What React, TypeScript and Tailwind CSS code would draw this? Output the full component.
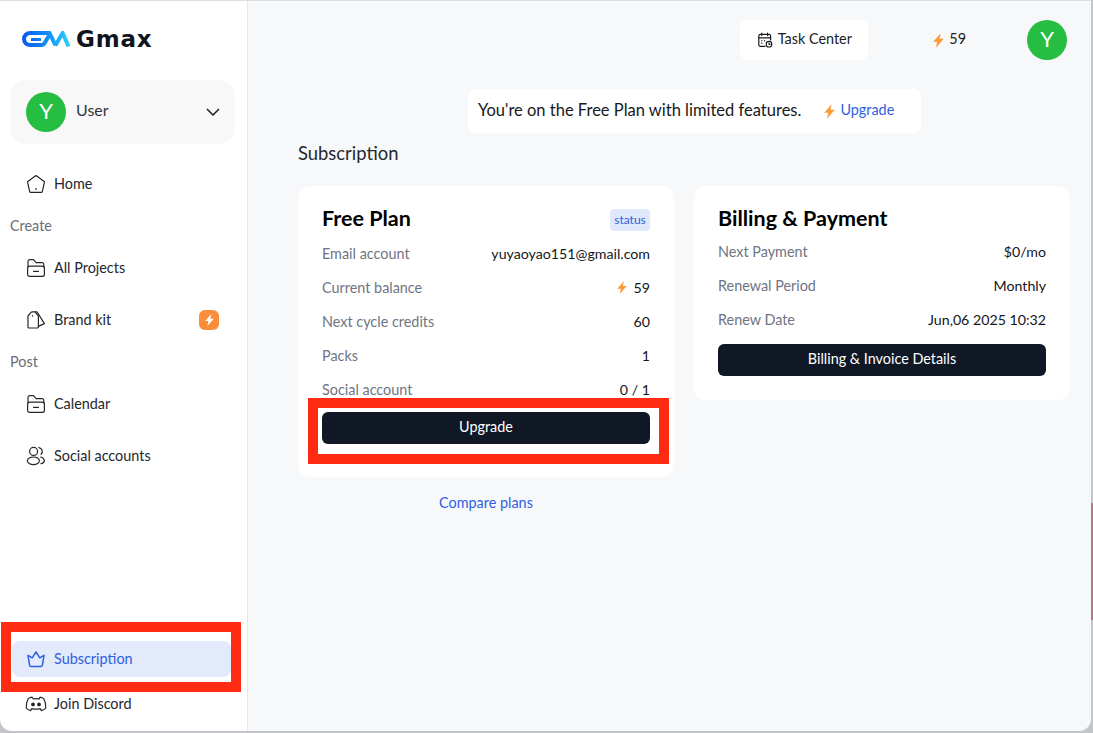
const font = { fontFamily: "Lato, 'Open Sans', sans-serif" };

type IconProps = { className?: string };

function Bolt({ className }: IconProps) {
  return (
    <svg viewBox="0 0 12 16" className={className} fill="#fb9a35">
      <path d="M8.4 0 0.2 9.4H4.6L3.2 16 11.8 6.2H7L8.4 0Z" />
    </svg>
  );
}

function Logo() {
  return (
    <svg viewBox="0 0 48 16" className="h-4 w-12" fill="none">
      <defs>
        <linearGradient id="gm" x1="0" x2="48" y1="0" y2="0" gradientUnits="userSpaceOnUse">
          <stop offset="0" stopColor="#0a58f0" />
          <stop offset="0.55" stopColor="#1391f4" />
          <stop offset="1" stopColor="#2ad4f5" />
        </linearGradient>
      </defs>
      <path
        d="M27 2H8.5C4.4 2 2 4.6 2 8S4.4 14 8.5 14H19.5C21.2 14 22 13.2 22.8 11.8L28 3L33.6 14.4"
        stroke="url(#gm)"
        strokeWidth="4"
      />
      <path d="M9 8.6H19" stroke="url(#gm)" strokeWidth="3" />
      <path d="M33.4 14.4L40.6 2L46.6 15.5" stroke="url(#gm)" strokeWidth="4" />
    </svg>
  );
}

const stroke = {
  fill: "none",
  stroke: "currentColor",
  strokeWidth: 1.2,
  strokeLinecap: "round" as const,
  strokeLinejoin: "round" as const,
};

function HomeIcon() {
  return (
    <svg viewBox="0 0 20 20" className="h-5 w-5" {...stroke}>
      <path d="M10 1.5 18.5 7.8 16.3 17.6a1 1 0 0 1-1 .8H4.7a1 1 0 0 1-1-.8L1.5 7.8 10 1.5Z" />
      <path d="M10 14.5v1" />
    </svg>
  );
}

function FolderIcon() {
  return (
    <svg viewBox="0 0 20 20" className="h-5 w-5" {...stroke}>
      <path d="M2 9V3.5A1.8 1.8 0 0 1 3.8 1.7H7.5L10 4.6H16A1.8 1.8 0 0 1 17.8 6.4V9" />
      <rect x="1.6" y="8.2" width="16.8" height="10.2" rx="2.2" />
      <path d="M7.6 13.4h4.8" />
    </svg>
  );
}

function TagIcon() {
  return (
    <svg viewBox="0 0 20 20" className="h-5 w-5" {...stroke}>
      <path d="M2 6 5 2.4A1.5 1.5 0 0 1 6.2 1.8H9L12.4 6V16.8A1.2 1.2 0 0 1 11.2 18H3.2A1.2 1.2 0 0 1 2 16.8V6Z" />
      <path d="M9.4 1.8H11L18.4 13.6 12.4 16.4" />
      <path d="M6.6 5.6v.5" />
    </svg>
  );
}

function UsersIcon() {
  return (
    <svg viewBox="0 0 20 20" className="h-5 w-5" {...stroke}>
      <circle cx="7.6" cy="5.4" r="4" />
      <ellipse cx="7.4" cy="14.8" rx="6" ry="3.8" />
      <path d="M12.8 1.6a3.8 3.8 0 0 1 2.2 6.6" />
      <path d="M14.6 11a5 5 0 0 1 3.8 3.6 3.6 3.6 0 0 1-3.4 3" />
    </svg>
  );
}

function CrownIcon() {
  return (
    <svg viewBox="0 0 20 20" className="h-5 w-5" {...stroke} strokeWidth={1.5}>
      <path d="M2 6.4 6.2 8.8 10 3l3.8 5.8L18 6.4l-1.6 9.8a1.4 1.4 0 0 1-1.4 1.2H5a1.4 1.4 0 0 1-1.4-1.2L2 6.4Z" />
    </svg>
  );
}

function DiscordIcon() {
  return (
    <svg viewBox="0 0 22 20" className="h-5 w-[22px] shrink-0" {...stroke}>
      <path d="M7 3.2C5.4 3.4 4 3.9 3.2 4.8 1.8 7.4 1 10.6 1.2 14c1 1.4 2.6 2.2 4.4 2.6l1.2-2c2.8.8 5.6.8 8.4 0l1.2 2c1.8-.4 3.4-1.2 4.4-2.6.2-3.4-.6-6.6-2-9.2-.8-.9-2.2-1.4-3.8-1.6l-.6 1.6c-2.2-.4-3.8-.4-6 0L7 3.2Z" />
      <circle cx="8" cy="10.4" r="1.3" fill="currentColor" />
      <circle cx="14" cy="10.4" r="1.3" fill="currentColor" />
    </svg>
  );
}

function TaskIcon() {
  return (
    <svg viewBox="0 0 16 16" className="h-4 w-4" {...stroke}>
      <path d="M8 14.4H3.4A1.6 1.6 0 0 1 1.8 12.8V4A1.6 1.6 0 0 1 3.4 2.4H12A1.6 1.6 0 0 1 13.6 4V8" />
      <path d="M4.8 1v2.6M10.6 1v2.6M1.8 5.8h11.8M4.8 8.6v.2M4.8 11.2v.2M7.6 8.6v.2" />
      <circle cx="12" cy="12.2" r="2.8" />
      <path d="M12 11v1.3h1" />
    </svg>
  );
}

function NavItem({ icon, label, extra }: { icon: React.ReactNode; label: string; extra?: React.ReactNode }) {
  return (
    <div className="flex h-9 items-center gap-2 pl-[26px] pr-[17px] text-[14.4px] text-[#25272c]">
      <span className="flex w-5 justify-center">{icon}</span>
      <span>{label}</span>
      {extra}
    </div>
  );
}

function Section({ label }: { label: string }) {
  return <div className="flex h-12 items-center text-[14.4px] text-[#6b6e76]">{label}</div>;
}

function Row({ label, children }: { label: string; children: React.ReactNode }) {
  return (
    <div className="flex h-[34px] items-center justify-between text-[14.4px]">
      <span className="text-[#6f7582]">{label}</span>
      <span className="flex items-center text-[14.2px] text-[#14161a]">{children}</span>
    </div>
  );
}

function Sidebar() {
  return (
    <aside className="flex w-[248px] shrink-0 flex-col border-r border-[#e5e7eb] bg-white pb-[9px]">
      <div className="flex h-[76px] items-center gap-[6px] pl-[22px]">
        <Logo />
        <span
          className="text-[23px] font-bold leading-none tracking-[0.8px] text-[#11141d]"
          style={{ fontFamily: "'DejaVu Sans', sans-serif" }}
        >
          Gmax
        </span>
      </div>
      <div className="mx-[10px] mt-[3px] flex h-16 w-[225px] items-center rounded-2xl bg-[#f8f8f9] pl-4 pr-[15px]">
        <span className="flex h-10 w-10 items-center justify-center rounded-full bg-[#25bd42] pb-[3px] text-[22px] text-white">
          Y
        </span>
        <span className="ml-[10px] flex-1 pb-[5px] text-[16px] text-[#33353a]">User</span>
        <svg viewBox="0 0 14 8" className="h-2 w-[14px]" fill="none" stroke="#1c1e22" strokeWidth="1.5">
          <path d="M1 1l6 6 6-6" />
        </svg>
      </div>

      <div className="mt-[22px] flex flex-col">
        <div className="h-9">
          <NavItem icon={<HomeIcon />} label="Home" />
        </div>
        <div className="pl-[10px]">
          <Section label="Create" />
        </div>
        <div className="flex flex-col gap-4">
          <NavItem icon={<FolderIcon />} label="All Projects" />
          <NavItem
            icon={<TagIcon />}
            label="Brand kit"
            extra={
              <span className="ml-auto mr-[11px] flex h-5 w-5 items-center justify-center rounded-md bg-[#fb8c38]">
                <svg viewBox="0 0 12 16" className="h-3 w-[9px]" fill="#ffffff">
                  <path d="M8.4 0 0.2 9.4H4.6L3.2 16 11.8 6.2H7L8.4 0Z" />
                </svg>
              </span>
            }
          />
        </div>
        <div className="pl-[10px]">
          <Section label="Post" />
        </div>
        <div className="flex flex-col gap-4">
          <NavItem icon={<FolderIcon />} label="Calendar" />
          <NavItem icon={<UsersIcon />} label="Social accounts" />
        </div>
      </div>

      <div className="mt-auto flex flex-col gap-[9px]">
        <div className="relative ml-[12px] mr-[16px] flex h-9 items-center gap-2 rounded-lg bg-[#e2eafb] pl-[14px] text-[14.4px] text-[#2f5fe0]">
          <span className="flex w-5 justify-center">
            <CrownIcon />
          </span>
          <span>Subscription</span>
          <div className="absolute bottom-[-15px] left-[-11px] right-[-10px] top-[-19px] border-[10px] border-[#ff2a12]" />
        </div>
        <NavItem icon={<DiscordIcon />} label="Join Discord" />
      </div>
    </aside>
  );
}

function Header() {
  return (
    <div className="flex h-[59px] items-end justify-end pr-[3px]">
      <div className="flex h-10 w-[128px] items-center justify-center gap-[5px] rounded-lg bg-white text-[14.4px] text-[#1b1d22]">
        <TaskIcon />
        <span className="pb-[2px]">Task Center</span>
      </div>
      <div className="ml-[65px] flex h-10 items-center gap-[5px] text-[14.4px] text-[#1b1d22]">
        <Bolt className="h-[15px] w-[11px]" />
        <span className="pb-[2px]">59</span>
      </div>
      <span className="ml-[61px] flex h-10 w-10 items-center justify-center rounded-full bg-[#25bd42] pb-[3px] text-[22px] text-white">
        Y
      </span>
    </div>
  );
}

function PlanCard() {
  return (
    <div className="flex flex-col items-center">
      <div className="w-[376px] rounded-xl bg-white px-6 pb-[33px] pt-[20px]">
        <div className="flex h-[26px] items-center justify-between">
          <h2 className="pb-[2px] text-[21.5px] font-bold text-black">Free Plan</h2>
          <span className="mt-[2px] flex h-[22px] w-10 items-center justify-center rounded bg-[#dfe9fb] pb-[1px] text-[12px] text-[#2f5fe0]">
            status
          </span>
        </div>
        <div className="mt-[5px]">
          <Row label="Email account">yuyaoyao151@gmail.com</Row>
          <Row label="Current balance">
            <Bolt className="mr-[7px] h-[13px] w-[10px]" />
            59
          </Row>
          <Row label="Next cycle credits">60</Row>
          <Row label="Packs">1</Row>
          <Row label="Social account">0 / 1</Row>
        </div>
        <div className="relative mt-[5px] flex h-8 items-center justify-center rounded-md bg-[#101825] pb-[2px] text-[14.4px] text-white">
          Upgrade
          <div className="absolute bottom-[-20px] left-[-14px] right-[-19px] top-[-14px] border-[10px] border-[#ff2a12]" />
        </div>
      </div>
      <div className="mt-[15px] text-[14.4px] text-[#2f5fe0]">Compare plans</div>
    </div>
  );
}

function BillingCard() {
  return (
    <div className="h-[214px] w-[376px] rounded-xl bg-white px-6 pt-[20px]">
      <h2 className="flex h-[26px] items-center pb-[2px] text-[21.5px] font-bold text-black">Billing &amp; Payment</h2>
      <div className="mt-[3px]">
        <Row label="Next Payment">$0/mo</Row>
        <Row label="Renewal Period">Monthly</Row>
        <Row label="Renew Date">Jun,06 2025 10:32</Row>
      </div>
      <div className="mt-[7px] flex h-8 items-center justify-center rounded-md bg-[#101825] pb-[2px] text-[14.4px] text-white">
        Billing &amp; Invoice Details
      </div>
    </div>
  );
}

export default function App() {
  return (
    <div className="relative h-[733px] w-[1093px] overflow-hidden bg-[#c4c5c9]" style={font}>
      <div className="absolute right-0 top-[503px] h-[117px] w-[2px] bg-[#b5778c]" />
      <div className="relative flex h-[731px] w-[1091px] overflow-hidden rounded-b-xl border-t border-[#dcdde0]">
        <Sidebar />
        <main className="flex-1 bg-[#f7f8fa] pl-[50px] pr-[21px]">
          <Header />
          <div className="mt-[29px] flex justify-center pl-[21px]">
            <div className="flex h-[44px] w-[453px] items-center rounded-lg bg-white pl-[10px] text-[16.5px] text-[#17191d]">
              <span className="pb-[1px]">You're on the Free Plan with limited features.</span>
              <Bolt className="ml-[23px] h-[15px] w-[11px]" />
              <span className="ml-[5px] pb-[2px] text-[14.4px] text-[#2f5fe0]">Upgrade</span>
            </div>
          </div>
          <h1 className="mt-[7px] flex h-[28px] items-center text-[18.4px] text-[#26282d]">Subscription</h1>
          <div className="mt-[18px] flex items-start gap-5">
            <PlanCard />
            <BillingCard />
          </div>
        </main>
      </div>
    </div>
  );
}
